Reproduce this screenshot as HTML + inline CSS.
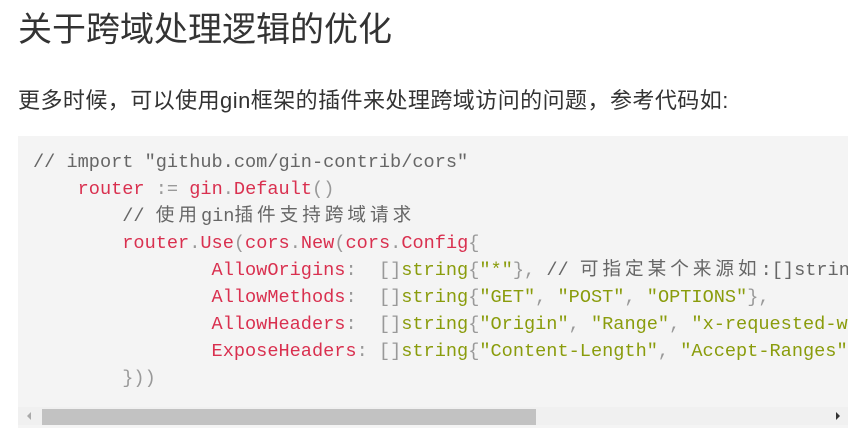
<!DOCTYPE html>
<html><head><meta charset="utf-8"><style>
body{margin:0;background:#fff;width:866px;height:437px;overflow:hidden;font-family:"Liberation Sans","Noto Sans CJK SC",sans-serif;}
h1{position:absolute;left:18px;top:8px;margin:0;font-size:34px;font-weight:normal;color:#333;line-height:44px;white-space:nowrap;}
p{position:absolute;left:18px;top:86px;margin:0;font-size:22px;color:#333;line-height:30px;white-space:nowrap;letter-spacing:0.45px;}
.code{position:absolute;left:18px;top:136px;width:830px;height:292px;background:#f4f4f4;overflow:hidden;}
pre{margin:0;position:absolute;left:15px;top:13px;font-family:"Liberation Mono","Noto Sans CJK SC",monospace;font-size:18.6px;line-height:27px;color:#555;white-space:pre;}
.r{color:#d9304f}.g{color:#8a9c0c}.p{color:#999}.c{color:#666}
.k{letter-spacing:4px}
.sb{position:absolute;left:0;top:271px;width:830px;height:18px;background:#f0f0f0;}
.th{position:absolute;left:24px;top:2px;width:494px;height:16px;background:#c2c2c2;}
.al{position:absolute;left:9px;top:5px;width:0;height:0;border-top:4px solid transparent;border-bottom:4px solid transparent;border-right:4px solid #aaa;}
.ar{position:absolute;right:8px;top:5px;width:0;height:0;border-top:4px solid transparent;border-bottom:4px solid transparent;border-left:4px solid #333;}
</style></head><body>
<h1>关于跨域处理逻辑的优化</h1>
<p>更多时候，可以使用gin框架的插件来处理跨域访问的问题，参考代码如:</p>
<div class="code"><pre><span class="c">// import "github.com/gin-contrib/cors"</span>
    <span class="r">router</span> <span class="p">:=</span> <span class="r">gin</span><span class="p">.</span><span class="r">Default</span><span class="p">()</span>
        <span class="c">// <span class="k">使用</span>gin<span class="k">插件支持跨域请求</span></span>
        <span class="r">router</span><span class="p">.</span><span class="r">Use</span><span class="p">(</span><span class="r">cors</span><span class="p">.</span><span class="r">New</span><span class="p">(</span><span class="r">cors</span><span class="p">.</span><span class="r">Config</span><span class="p">{</span>
                <span class="r">AllowOrigins</span><span class="p">:  []</span><span class="g">string</span><span class="p">{</span><span class="g">"*"</span><span class="p">}</span><span class="p">,</span> <span class="c">// <span class="k">可指定某个来源如</span>:[]string{"http://localhost"}</span>
                <span class="r">AllowMethods</span><span class="p">:  []</span><span class="g">string</span><span class="p">{</span><span class="g">"GET"</span><span class="p">,</span> <span class="g">"POST"</span><span class="p">,</span> <span class="g">"OPTIONS"</span><span class="p">},</span>
                <span class="r">AllowHeaders</span><span class="p">:  []</span><span class="g">string</span><span class="p">{</span><span class="g">"Origin"</span><span class="p">,</span> <span class="g">"Range"</span><span class="p">,</span> <span class="g">"x-requested-with"</span><span class="p">}</span>
                <span class="r">ExposeHeaders</span><span class="p">: []</span><span class="g">string</span><span class="p">{</span><span class="g">"Content-Length"</span><span class="p">,</span> <span class="g">"Accept-Ranges"</span><span class="p">}</span>
        <span class="p">}))</span></pre>
<div class="sb"><div class="al"></div><div class="th"></div><div class="ar"></div></div>
</div>
</body></html>
